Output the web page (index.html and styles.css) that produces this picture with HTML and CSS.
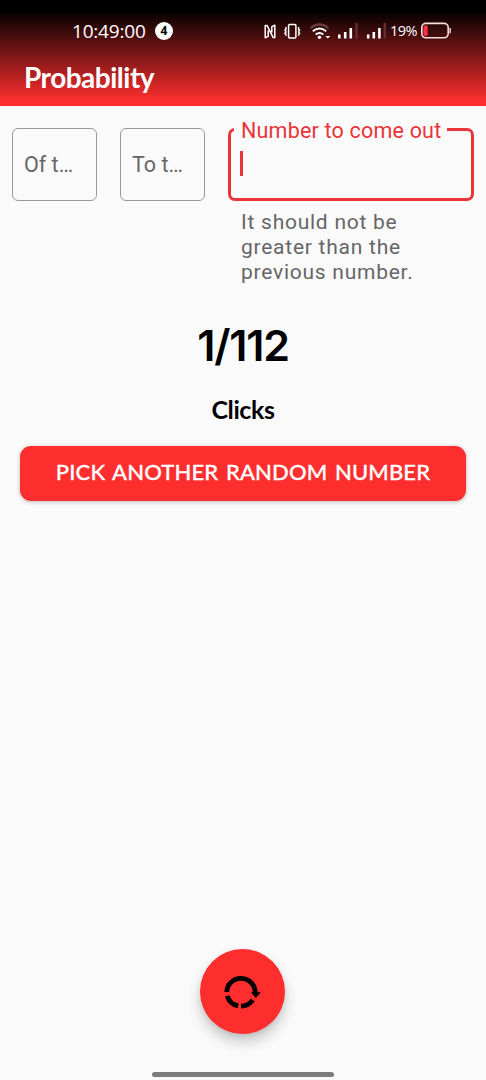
FILE: index.html
```html
<!DOCTYPE html>
<html lang="en">
<head>
<meta charset="utf-8">
<title>Probability</title>
<link rel="stylesheet" href="styles.css">
</head>
<body>
<header class="top">
  <div class="status">
    <span class="time">10:49:00</span>
    <span class="count">4</span>
    <svg class="sys" width="140" height="20" viewBox="0 0 140 20" fill="none" stroke="#fff" stroke-width="1.5">
      <path d="M5.2 9.5V15.4L2.2 16.8V4.4L4 4.4L10.2 16.6L11.8 16.6V4.2L8.8 5.6V11.5" stroke-width="1.5" stroke-linejoin="round"/>
      <rect x="25.6" y="3.6" width="7.3" height="13.4" rx="1"/>
      <path d="M22.9 6v2.3l-1 1 1 1v1l-1 1 1 1v1.5M35.6 6v2.3l1 1-1 1v1l1 1-1 1v1.5" stroke-width="1.5"/>
      <path d="M47.5 7.2Q56.5 -.5 65.5 7.2" stroke="#6f3b3d" stroke-width="2"/>
      <path d="M49.8 10.2Q56.5 4.8 63.2 10.2M52.7 13.5Q56.5 10.4 60.3 13.5" stroke-width="2"/>
      <circle cx="56.5" cy="16.3" r="1.7" fill="#fff" stroke="none"/>
      <path d="M62.3 15h5l-2.5 2.6z" fill="#fff" stroke="none"/>
      <path d="M76.3 17.5v-4M82.2 17.5v-6.5M87.8 17.5V7M105.2 17.5v-4M110.8 17.5v-6.5M116.4 17.5V7" stroke-width="2.6"/>
      <path d="M93.5 17.5V2M121.8 17.5V2" stroke="#672e30" stroke-width="2.4"/>
    </svg>
    <span class="percent">19%</span>
    <svg class="battery" width="32" height="18" viewBox="0 0 32 18">
      <rect x="1.8" y="1.4" width="26.4" height="14.4" rx="4.2" fill="none" stroke="#f8dedc" stroke-width="1.6"/>
      <path d="M5.4 3.4h2.2v10.4H5.4a2 2 0 0 1-2-2V5.4a2 2 0 0 1 2-2z" fill="#ff3344"/>
      <path d="M30.2 6v5.2" stroke="#f8dedc" stroke-width="1.4"/>
    </svg>
  </div>
  <h1 class="title">Probability</h1>
</header>
<main class="content">
  <section class="fields">
    <div class="field"><span>Of t…</span></div>
    <div class="field"><span>To t…</span></div>
    <div class="active-field">
      <fieldset class="outline">
        <legend>Number to come out</legend>
        <div class="caret"></div>
      </fieldset>
      <p class="help">It should not be<br>greater than the<br>previous number.</p>
    </div>
  </section>
  <div class="result"><span>1/112</span></div>
  <div class="clicks"><span>Clicks</span></div>
  <button class="pick"><span>PICK ANOTHER RANDOM NUMBER</span></button>
</main>
<footer class="bottom">
  <button class="fab" aria-label="Restart">
    <svg width="42" height="42" viewBox="-21 -21 42 42" fill="none" stroke="#000" stroke-width="4.8">
      <path d="M-14.2 0A14.2 14.2 0 0 1 14.2 1"/>
      <path d="M-13.7 3.8A14.2 14.2 0 0 0 -2.8 13.9M0 14.2A14.2 14.2 0 0 0 11.7 8"/>
      <path d="M10 .2H19.8L14.8 6z" fill="#000" stroke="none"/>
    </svg>
  </button>
  <div class="home"></div>
</footer>
</body>
</html>
```
FILE: styles.css
```css
* { box-sizing: border-box; }
body {
  margin: 0;
  height: 1080px;
  display: flex;
  flex-direction: column;
  background: #fafafa;
  font-family: Roboto, sans-serif;
  overflow: hidden;
}
button { border: 0; padding: 0; font: inherit; }
.top {
  height: 106px;
  background: linear-gradient(#000 0, #000 10px, #ff2e2e 102px);
  color: #fff;
}
.status {
  display: flex;
  align-items: center;
  height: 61px;
  padding: 1px 0 0 72px;
}
.time {
  width: 83px;
  font: 19px/24px "Open Sans", sans-serif;
  letter-spacing: -.2px;
  white-space: nowrap;
}
.count {
  width: 18px;
  height: 18px;
  border-radius: 50%;
  background: #fff;
  color: #000;
  font: bold 12px/18px "Open Sans", sans-serif;
  text-align: center;
}
.sys { margin-left: 90px; flex: none; }
.percent {
  width: 31px;
  margin-left: -13px;
  font: 500 14.5px/20px "Open Sans", sans-serif;
  letter-spacing: -.6px;
}
.battery { flex: none; margin-left: -1px; }
.title {
  margin: 0;
  padding-left: 24px;
  font: bold 28px/32px Lato, sans-serif;
  letter-spacing: -.5px;
}
.content { flex: 1; display: flex; flex-direction: column; padding-top: 22px; }
.fields { display: flex; height: 166px; padding: 0 12px; }
.field {
  width: 85px;
  height: 73px;
  margin-right: 23px;
  padding: 0 11px;
  border: 1px solid #999;
  border-radius: 6px;
  color: #666;
  font-size: 21.5px;
  line-height: 72px;
  white-space: nowrap;
}
.active-field { width: 246px; }
.outline {
  height: 84px;
  margin: -11px 0 0;
  padding: 0 0 0 9px;
  border: 3px solid #e8353a;
  border-radius: 7px;
}
.outline legend {
  height: 25px;
  margin-left: -6px;
  padding: 0 6px 0 7px;
  color: #e8353a;
  font-size: 21.5px;
  line-height: 28px;
  letter-spacing: .2px;
  white-space: nowrap;
}
.caret { width: 3px; height: 25px; margin-top: 9px; background: #e8353a; }
.help {
  margin: 9px 0 0 13px;
  color: #666;
  font-size: 21px;
  line-height: 25px;
  letter-spacing: .75px;
  white-space: nowrap;
}
.result {
  height: 100px;
  text-align: center;
  font: 600 43px/103px Inter, sans-serif;
  letter-spacing: -1.2px;
}
.clicks {
  height: 52px;
  text-align: center;
  font: bold 25px/30px Lato, sans-serif;
  letter-spacing: -.4px;
}
.pick {
  width: 446px;
  height: 55px;
  margin: 0 20px;
  border-radius: 11px;
  background: #ff2e2e;
  box-shadow: 0 1px 4px rgba(0, 0, 0, .25);
  color: #fff;
  font: 500 22px/52px Lato, sans-serif;
  letter-spacing: .15px;
  word-spacing: 1.8px;
  white-space: nowrap;
  -webkit-text-stroke: .3px #fff;
}
.pick span { display: block; height: 55px; }
.bottom { height: 131px; display: flex; flex-direction: column; align-items: center; }
.fab {
  display: flex;
  align-items: center;
  justify-content: center;
  width: 85px;
  height: 85px;
  margin-right: 1px;
  border-radius: 50%;
  background: #ff2e2e;
  box-shadow: 0 8px 14px rgba(0, 0, 0, .2), 0 2px 5px rgba(0, 0, 0, .08);
}
.fab svg { margin: 0 3px 0 0; }
.home { width: 182px; height: 5px; margin-top: 38px; border-radius: 3px; background: #7c7c7c; }
```
